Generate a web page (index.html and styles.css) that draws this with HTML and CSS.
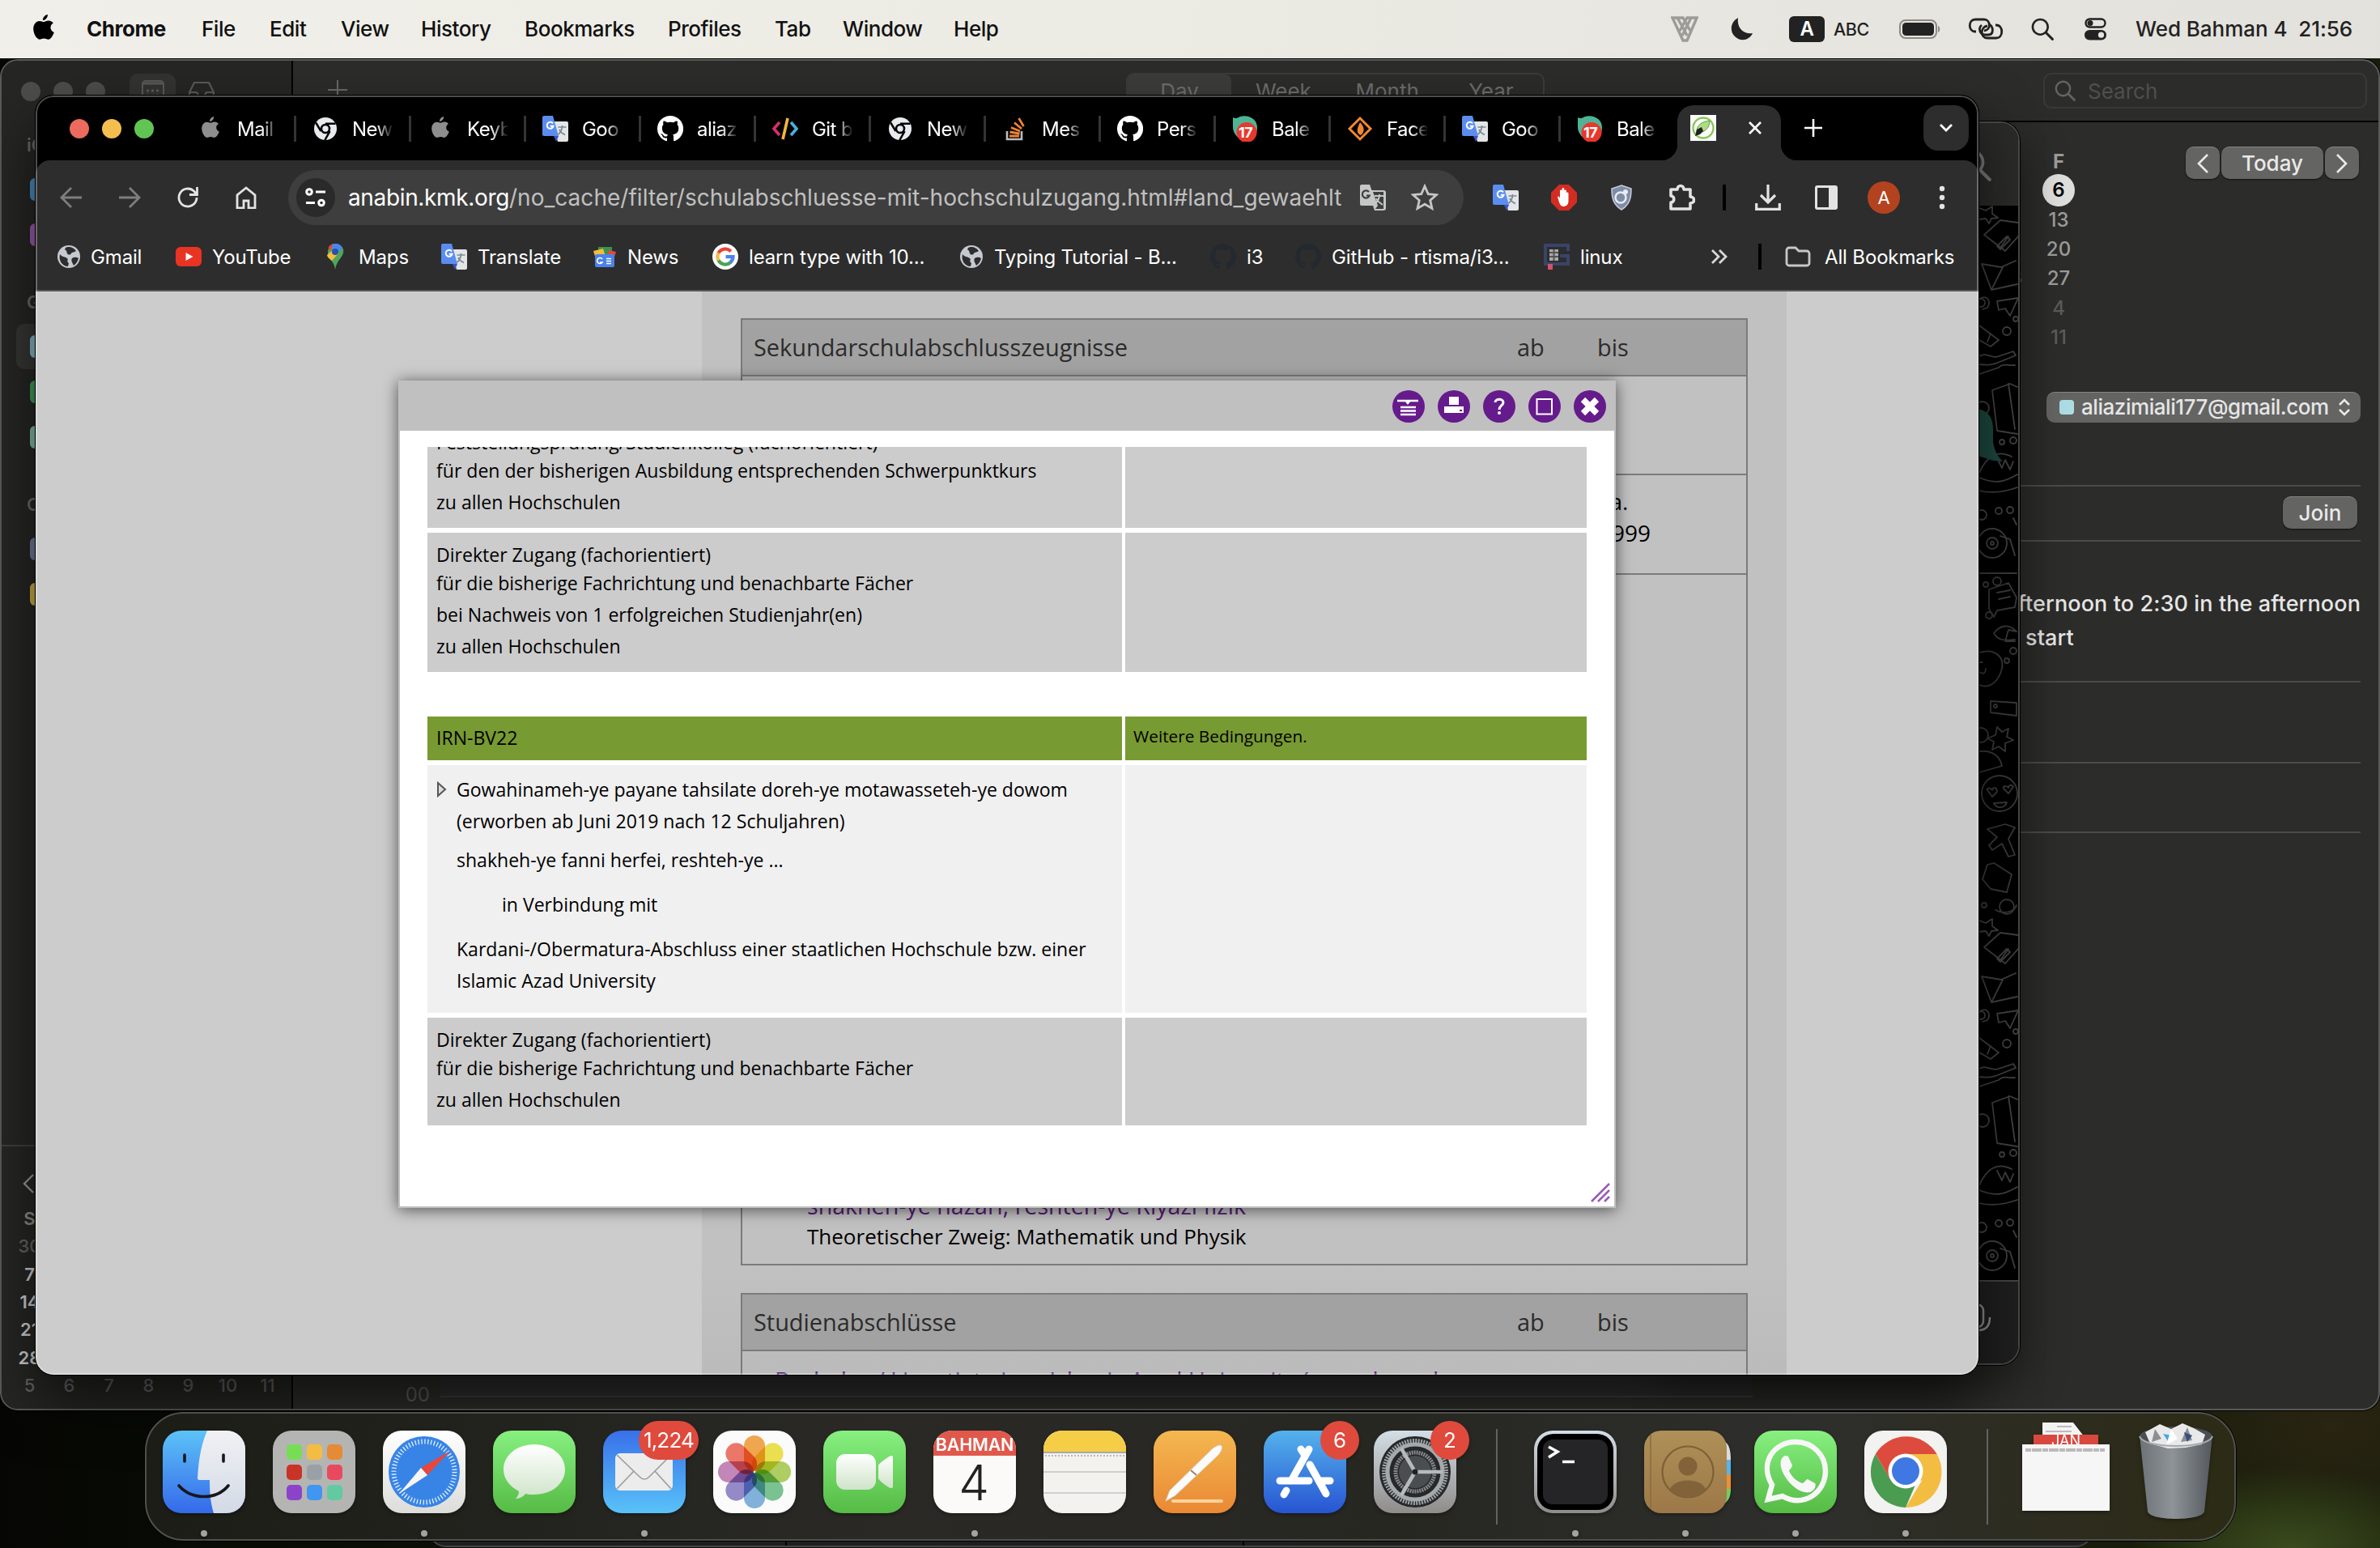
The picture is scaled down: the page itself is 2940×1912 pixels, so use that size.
FILE: index.html
```
<!DOCTYPE html>
<html lang="en">
<head>
<meta charset="utf-8">
<title>Desktop</title>
<link rel="stylesheet" href="styles.css">
</head>
<body>
<svg class="defs" width="0" height="0" aria-hidden="true">
  <defs>
    <linearGradient id="gGreen" x2="0" y2="1"><stop offset="0" stop-color="#87f080"/><stop offset="1" stop-color="#55bb45"/></linearGradient>
    <linearGradient id="gWhite" x2="0" y2="1"><stop offset="0" stop-color="#ffffff"/><stop offset="1" stop-color="#cfe3c9"/></linearGradient>
    <linearGradient id="gBlue" x2="0" y2="1"><stop offset="0" stop-color="#3870ea"/><stop offset="1" stop-color="#59c2f8"/></linearGradient>
    <linearGradient id="gFinder" x2="0" y2="1"><stop offset="0" stop-color="#5cc3f8"/><stop offset="1" stop-color="#3569ea"/></linearGradient>
    <linearGradient id="gFace" x2="0" y2="1"><stop offset="0" stop-color="#f1f1f4"/><stop offset="1" stop-color="#d2dae6"/></linearGradient>
    <linearGradient id="gStore" x2="0" y2="1"><stop offset="0" stop-color="#54b2ec"/><stop offset="1" stop-color="#2754d2"/></linearGradient>
    <linearGradient id="gPages" x2="0" y2="1"><stop offset="0" stop-color="#f4b850"/><stop offset="1" stop-color="#ea8834"/></linearGradient>
    <linearGradient id="gSilver" x2="0" y2="1"><stop offset="0" stop-color="#d3dee6"/><stop offset="1" stop-color="#8f8c89"/></linearGradient>
    <linearGradient id="gPaper" x2="0" y2="1"><stop offset="0" stop-color="#ffffff"/><stop offset="1" stop-color="#dcdcda"/></linearGradient>
    <linearGradient id="gTan" x2="0" y2="1"><stop offset="0" stop-color="#af9057"/><stop offset="1" stop-color="#9c7848"/></linearGradient>
    <linearGradient id="gBin"><stop offset="0" stop-color="#6d7277"/><stop offset=".45" stop-color="#8e9398"/><stop offset="1" stop-color="#54585d"/></linearGradient>
    <clipPath id="squircle"><rect width="102" height="102" rx="23"/></clipPath>

    <symbol id="apple" viewBox="0 0 26 30"><path d="M17.6 0c.3 3.300-2.600 6.700-5.600 6.600C11.600 3.600 14.500.4 17.600 0zM13.200 8.500c1.300 0 2.900-1.500 5.600-1.400 2.300.1 4.200 1.200 5.200 2.800-4.600 2.900-3.700 8.900 1 10.700-1 2.800-3.500 8-6.600 8.200-1.900.1-2.700-1.100-5.100-1.100-2.300 0-3.300 1.100-5.100 1.100C4.600 28.700 1 21.900 1 16.500 1 11 4.400 7.500 8 7.400c2.300 0 3.900 1.100 5.200 1.100z"/></symbol>
    <symbol id="chromeMono" viewBox="0 0 28 28"><path fill="#e8eaed" fill-rule="evenodd" d="M14 0a14 14 0 1 0 0 28 14 14 0 0 0 0-28z"/><circle cx="14" cy="14" r="5" fill="none" stroke="#000" stroke-width="2.600"/><path stroke="#000" stroke-width="2.500" fill="none" d="M14 7.700h12.500M8.500 17.200 2.200 6.500M19.500 17.200 13.300 28"/></symbol>
    <symbol id="translate" viewBox="0 0 32 32"><path fill="#e3e5e6" d="M12 7h18a2 2 0 0 1 2 2v21a2 2 0 0 1-2 2H19z"/><path fill="#5b8df0" d="M2 0h11l7 25H2a2 2 0 0 1-2-2V2a2 2 0 0 1 2-2z"/><path fill="#3a53c4" d="m14 25h6l-3 7z"/><path d="M13 9.500a4 4 0 1 0 .6 3.300H9.800" fill="none" stroke="#fff" stroke-width="2"/><path d="M19.500 14h10M24.500 12v2c0 0-1 6-5 9M21 17c1 3 4 5 7 6.500" fill="none" stroke="#7a8b94" stroke-width="1.700"/></symbol>
    <symbol id="github" viewBox="0 0 16 16"><path d="M8 0a8 8 0 0 0-2.530 15.590c.4.070.55-.17.55-.38v-1.490c-2.010.37-2.530-.49-2.690-.940-.09-.23-.48-.940-.820-1.130-.28-.15-.68-.52-.01-.53.630-.01 1.080.58 1.230.820.720 1.210 1.870.870 2.330.660.070-.52.280-.870.510-1.070-1.780-.2-3.640-.89-3.640-3.950 0-.870.31-1.590.82-2.150-.080-.2-.36-1.020.080-2.120 0 0 .67-.21 2.200.82a7.500 7.500 0 0 1 4 0c1.530-1.040 2.200-.82 2.200-.82.44 1.100.16 1.920.08 2.120.51.56.82 1.270.82 2.150 0 3.070-1.870 3.750-3.650 3.950.29.25.54.730.54 1.480v2.200c0 .21.150.46.550.38A8 8 0 0 0 8 0z"/></symbol>
    <symbol id="bale" viewBox="0 0 32 32"><path fill="#4fb496" d="M1 2c4 2 5 1 9-1 10-3 22 3 21 15S20 31 14 30 1 22 1 14z"/><circle cx="18" cy="20.500" r="12.500" fill="#e8372c"/></symbol>
    <symbol id="globe" viewBox="0 0 30 30"><circle cx="15" cy="15" r="14" fill="#c6cad0"/><path fill="#2d2d2d" d="M4 12c3 4 7 3 9 5s-1 3 1 5 0 3 0 5C7 27 2 20 4 12zM14 3c5 0 8 2 10 5-2 2-5 1-6 3s-4 2-5 0 0-3-2-4 0-4 3-4zM19 17c3-2 6-1 8 0-1 4-3 7-6 9-1-3-4-6-2-9z"/></symbol>
    <symbol id="search" viewBox="0 0 26 26"><circle cx="10.500" cy="10.500" r="8.700" fill="none" stroke="currentColor" stroke-width="2.400"/><path d="m17 17 7.500 7.500" stroke="currentColor" stroke-width="2.800" stroke-linecap="round"/></symbol>
    <symbol id="doodle" viewBox="0 0 50 440">
      <g fill="none" stroke="#424242" stroke-width="1.800" stroke-linejoin="round" stroke-linecap="round">
        <path d="M2 3l8 3 8-5 0 9 7 5-8 1-3 6-4-6-9 1M8 36 28 18l22 3M8 36l26 20 16-18M28 52 38 38M24 50l12-12 4 4-12 12zM5 72l24 4 18-8M5 72l12 32 14-28M17 104l32-7"/>
        <circle cx="4" cy="120" r="5"/><path d="M2 116c8-8 16 2 10 10l-6 2M24 118l26-4-10 22-6-9-8 2zM2 148l24 18-10 8-14-8M16 158l-4 10"/><circle cx="36" cy="155" r="5"/><circle cx="47" cy="140" r="3"/>
        <path d="M2 186c10-6 14 4 24 0l18-6 3 5-20 8c-8 4-14 4-25 3M2 208l24-8c4-6 12-2 20-3M18 228l22-8 9 4M18 228l6 50 25 4M38 220l8 56"/><circle cx="6" cy="250" r="8"/><circle cx="30" cy="292" r="3"/><circle cx="44" cy="290" r="4"/>
        <path d="M2 330c8-18 20-30 40-20M2 336c20 8 30 6 47-4M24 312l6 12 4-10 6 12 4-10M2 352c16 4 30 2 47-4"/><circle cx="26" cy="377" r="4"/><circle cx="40" cy="376" r="4"/><circle cx="5" cy="382" r="6"/>
        <circle cx="18" cy="417" r="18"/><circle cx="18" cy="417" r="7"/><circle cx="18" cy="417" r="2"/><path d="M28 408l12 4 6 20M44 386l4 8"/>
      </g>
    </symbol>
    <symbol id="doodle2" viewBox="0 0 50 440">
      <g fill="none" stroke="#3a3a3a" stroke-width="1.800" stroke-linejoin="round" stroke-linecap="round">
        <path d="M2 14h46M14 34l24-8 10 18-2 12-22 4-4 8-6-10zM24 38l16-3M26 46l14-3M20 88c8-10 18-12 28-2l-10-2-4 14h12M20 88c4 8 12 10 26 8"/><circle cx="24" cy="24" r="5"/><circle cx="10" cy="28" r="3"/><circle cx="14" cy="66" r="4"/>
        <path d="M2 112c20-6 34 6 26 26-6 14-16 18-26 14M2 124h4M2 136c6 4 8 0 8-4"/><circle cx="36" cy="122" r="3"/><circle cx="44" cy="110" r="4"/><path d="M16 172l32 2v16l-32-4zM24 204l6 6 8-4-2 10 8 4-10 4 0 10-8-6-8 4 2-10-8-4 10-4zM2 234c18-2 26 8 28 18l-28 8"/><circle cx="22" cy="178" r="2"/><circle cx="4" cy="214" r="9"/>
        <circle cx="27" cy="286" r="22"/><path d="M12 282l6 8 6-6c0-6-6-6-6-2-2-4-8-2-6 0zM32 280l6 6 6-8c-2-4-6-2-6 1-2-3-8-2-6 1zM20 298c4 8 14 6 16-1z"/><path d="M12 330l22-6 12 4-8 14 8 20-8 2-8-16-12 8-4-6 10-10z"/>
        <path d="M6 392l6-18 8-2 22 14-6 22-20-4z"/><circle cx="36" cy="426" r="9"/><path d="M22 430c10 6 24 2 26-6"/><circle cx="8" cy="424" r="3"/>
      </g>
    </symbol>
  </defs>
</svg>

<header class="menubar">
  <nav class="menus">
    <svg class="menu-apple" viewBox="0 0 26 30"><use href="#apple"/></svg>
    <b>Chrome</b><span>File</span><span>Edit</span><span>View</span><span>History</span><span>Bookmarks</span><span>Profiles</span><span>Tab</span><span>Window</span><span>Help</span>
  </nav>
  <div class="status">
    <svg width="34" height="34" viewBox="0 0 34 34" fill="none" stroke="#9d9c98" stroke-width="3.400"><path d="M2 3h6l9 16 8-16h7L20 31h-5L2 3zM8 3h7l9 16M26 3h-6l-9 16M14 25l3-6 3 6"/></svg>
    <svg width="30" height="30" viewBox="0 0 30 30"><path fill="#222" d="M10 1C1 6-1 17 6 24s18 5 22-4C19 22 8 15 10 1z"/></svg>
    <i class="key">A</i><small>ABC</small>
    <svg width="52" height="24" viewBox="0 0 52 24"><rect x="1" y="1" width="45" height="22" rx="7" fill="none" stroke="#8b8a86" stroke-width="2"/><rect x="4" y="4" width="39" height="16" rx="4.500" fill="#222"/><path d="M48 8c3 1 3 7 0 8z" fill="#8b8a86"/></svg>
    <svg width="44" height="28" viewBox="0 0 44 28" fill="none" stroke="#222" stroke-width="2.800"><path d="M10 17H9C0 17 0 2 9 2h11c8 0 9 13 0 14M34 9h1c9 0 9 16 0 16H24c-9 0-9-14 0-15"/><path d="M17 9c-5 4-2 12 4 12h4c7 0 7-10 1-13"/></svg>
    <svg width="28" height="28" viewBox="0 0 26 26" class="ink"><use href="#search"/></svg>
    <svg width="27" height="28" viewBox="0 0 27 28"><rect x="1.500" y="1.500" width="24" height="10" rx="5" fill="none" stroke="#222" stroke-width="2.400"/><circle cx="7" cy="6.500" r="3.500" fill="#222"/><rect y="15" width="27" height="12.500" rx="6.200" fill="#222"/><circle cx="20.500" cy="21.200" r="3.600" fill="#e6e4de"/></svg>
    <time>Wed Bahman 4&nbsp; 21:56</time>
  </div>
</header>

<section class="window calendar">
  <aside class="cal-side">
    <div class="cal-side-top"><i class="dim-light"></i><i class="dim-light"></i><i class="dim-light"></i>
      <span class="cal-toggle"><svg width="28" height="28" viewBox="0 0 28 28"><rect x="1" y="1" width="26" height="26" rx="4" fill="none" stroke="#5a5a59" stroke-width="2"/><path stroke="#5a5a59" stroke-width="3" d="M2 4h24"/><path stroke="#5a5a59" stroke-width="3" stroke-dasharray="3 3" d="M6 13h17M6 19h17"/></svg></span>
      <svg width="32" height="26" viewBox="0 0 32 26" fill="none" stroke="#5a5a59" stroke-width="2.200"><path d="M1 14 7 2h18l6 12v10H1zM1 14h9l3 5h6l3-5h9"/></svg>
    </div>
    <div class="cal-list">
      <h4>iCloud</h4><p class="c-blue"></p><p class="c-purple"></p>
      <h4>Google</h4><p class="c-sky on"></p><p class="c-green"></p><p class="c-mint"></p>
      <h4>Other</h4><p class="c-slate"></p><p class="c-gold"></p>
    </div>
    <div class="mini">
      <div class="mini-nav"><svg width="14" height="24" viewBox="0 0 14 24" fill="none" stroke="#9a9a99" stroke-width="2.400"><path d="M13 1 2 12l11 11"/></svg></div>
      <div class="mini-grid"><b>S</b><b>M</b><b>T</b><b>W</b><b>T</b><b>F</b><b>S</b>
        <i>30</i><i>31</i><span>1</span><span>2</span><span>3</span><span>4</span><span>5</span>
        <span>7</span><span>8</span><span>9</span><span>10</span><span>11</span><span>12</span><span>13</span>
        <span>14</span><span>15</span><span>16</span><span>17</span><span>18</span><span>19</span><span>20</span>
        <span>21</span><span>22</span><span>23</span><span>24</span><span>25</span><span>26</span><span>27</span>
        <span>28</span><span>29</span><span>30</span><span>31</span><i>1</i><i>2</i><i>3</i>
        <i>5</i><i>6</i><i>7</i><i>8</i><i>9</i><i>10</i><i>11</i></div>
    </div>
  </aside>
  <div class="cal-main">
    <div class="cal-bar">
      <svg width="24" height="24" viewBox="0 0 24 24" stroke="#6a6a69" stroke-width="2"><path d="M12 0v24M0 12h24"/></svg>
      <div class="segments"><span class="on">Day</span><span>Week</span><span>Month</span><span>Year</span></div>
      <div class="cal-search"><svg width="26" height="26" viewBox="0 0 26 26"><use href="#search"/></svg>Search</div>
    </div>
    <div class="cal-body">
      <div class="timeline"><span>00</span><div class="slots"></div></div>
      <div class="inspector">
        <div class="month">
          <div class="month-col left"><b>&nbsp;</b><span>&nbsp;</span><span>12</span><span>19</span><span>26</span><i>3</i><i>10</i></div>
          <div class="month-col"><b>F</b><span class="today">6</span><span>13</span><span>20</span><span>27</span><i>4</i><i>11</i></div>
          <div class="pager"><button><svg width="14" height="24" viewBox="0 0 14 24"><path d="M13 1 2 12l11 11"/></svg></button><button class="wide">Today</button><button><svg width="14" height="24" viewBox="0 0 14 24"><path d="m1 1 11 11L1 23"/></svg></button></div>
        </div>
        <div class="account"><i></i>aliazimiali177@gmail.com<svg width="16" height="24" viewBox="0 0 16 24"><path d="m2 9 6-6 6 6M2 15l6 6 6-6"/></svg></div>
        <div class="join"><button>Join</button></div>
        <div class="note"><p class="clip">afternoon to 2:30 in the afternoon</p><p class="second">start</p></div>
        <div class="line-a"></div><div class="line-b"></div>
      </div>
    </div>
  </div>
</section>

<section class="window chat">
  <div class="chat-head"><svg width="40" height="40" viewBox="0 0 26 26"><use href="#search"/></svg></div>
  <div class="chat-body">
    <svg width="50" height="440"><use href="#doodle"/></svg><svg width="50" height="440"><use href="#doodle2"/></svg><svg width="50" height="440"><use href="#doodle"/></svg>
    <svg class="bubble" width="40" height="66" viewBox="0 0 40 66"><path fill="#1c4a40" d="M0 0c20 0 28 10 28 26v16c2 12 6 18 12 24-12 0-20-4-28-6H0z"/></svg>
  </div>
  <div class="chat-foot"><svg width="26" height="44" viewBox="0 0 26 44" fill="none" stroke="#8d8d8c" stroke-width="2.500"><path d="M2 4c6-4 12 0 12 6v12c0 8-8 10-12 6M22 18c0 12-6 16-14 16M8 34v8"/></svg></div>
</section>

<section class="window chrome">
  <div class="tabstrip">
    <div class="lights"><i></i><i></i><i></i></div>
    <div class="tabs">
      <div class="tab"><svg class="fav grey" viewBox="0 0 26 30"><use href="#apple"/></svg><span>Mail</span></div>
      <div class="tab"><svg class="fav f28" viewBox="0 0 28 28"><use href="#chromeMono"/></svg><span>New</span></div>
      <div class="tab"><svg class="fav grey" viewBox="0 0 26 30"><use href="#apple"/></svg><span>Keyb</span></div>
      <div class="tab"><svg class="fav" viewBox="0 0 32 32"><use href="#translate"/></svg><span>Goo</span></div>
      <div class="tab"><svg class="fav white" viewBox="0 0 16 16"><use href="#github"/></svg><span>aliaz</span></div>
      <div class="tab"><svg class="fav" viewBox="0 0 32 32" fill="none" stroke-width="3.600"><path stroke="#d62e6c" d="M9 8 2 16l7 8"/><path stroke="#f5b63c" d="M19 3 13 29"/><path stroke="#4ab0e0" d="m23 8 7 8-7 8"/></svg><span>Git b</span></div>
      <div class="tab"><svg class="fav f28" viewBox="0 0 28 28"><use href="#chromeMono"/></svg><span>New</span></div>
      <div class="tab"><svg class="fav" viewBox="0 0 32 32" fill="none"><path stroke="#b9bbbd" stroke-width="2.600" d="M6 19v10h18V19"/><path stroke="#ef8236" stroke-width="2.800" d="M9 25h12M9.500 20l12 2M11 14.500l11 4.500M15 8.500l9 7.500M20.500 3l6 10"/></svg><span>Mes</span></div>
      <div class="tab"><svg class="fav white" viewBox="0 0 16 16"><use href="#github"/></svg><span>Pers</span></div>
      <div class="tab"><span class="favbox"><svg class="fav" viewBox="0 0 32 32"><use href="#bale"/></svg><em>17</em></span><span>Bale</span></div>
      <div class="tab"><svg class="fav" viewBox="0 0 32 32" fill="none"><path stroke="#ef8733" stroke-width="3" d="m16 3 13 13-13 13L3 16z"/><path fill="#ef8733" d="M16 8c6 6 6 12 1 16-5-2-6-6-1-16z"/></svg><span>Face</span></div>
      <div class="tab"><svg class="fav" viewBox="0 0 32 32"><use href="#translate"/></svg><span>Goo</span></div>
      <div class="tab last"><span class="favbox"><svg class="fav" viewBox="0 0 32 32"><use href="#bale"/></svg><em>17</em></span><span>Bale</span></div>
    </div>
    <div class="tab-active">
      <svg class="fav" viewBox="0 0 32 32"><path fill="#fff" d="M0 0h32v32H0z"/><circle cx="16" cy="16" r="12.500" fill="none" stroke="#8ac75a" stroke-width="2.400"/><path fill="#aedb86" stroke="#5ea536" d="M8 22C7 13 14 8 24 7c0 8-5 15-14 14z"/><path fill="#222" d="m6 26 2-8 6-3 2 5-4 4z"/></svg>
      <svg width="18" height="18" viewBox="0 0 18 18" stroke="#fff" stroke-width="2.600"><path d="m2 2 14 14M16 2 2 16"/></svg>
    </div>
    <svg class="plus" width="22" height="22" viewBox="0 0 22 22" stroke="#fff" stroke-width="2.600"><path d="M11 0v22M0 11h22"/></svg>
    <div class="tab-list"><svg width="18" height="12" viewBox="0 0 18 12" fill="none" stroke="#fff" stroke-width="2.800"><path d="m2 2 7 7 7-7"/></svg></div>
  </div>
  <div class="toolbar">
    <div class="nav">
      <svg width="28" height="28" viewBox="0 0 28 28" stroke="#7e7e7e"><path d="M27 14H3M14 2 2 14l12 12"/></svg>
      <svg width="28" height="28" viewBox="0 0 28 28" stroke="#7e7e7e"><path d="M1 14h24M14 2l12 12-12 12"/></svg>
      <svg width="28" height="28" viewBox="0 0 28 28" stroke="#e3e3e3"><path d="M25 14a11 11 0 1 1-3.500-8l3.500 4M25.500 1v9.500H16"/></svg>
      <svg width="28" height="28" viewBox="0 0 28 28" stroke="#e3e3e3"><path d="M3 27V11L14 2l11 9v16h-8v-9h-6v9z"/></svg>
    </div>
    <div class="omnibox">
      <span class="site"><svg width="26" height="24" viewBox="0 0 26 24" fill="none" stroke="#fff" stroke-width="3"><circle cx="5" cy="5" r="3.300"/><path d="M13 5h12M1 18.500h11"/><circle cx="20" cy="18.500" r="3.300"/></svg></span>
      <span class="url"><b>anabin.kmk.org</b>/no_cache/filter/schulabschluesse-mit-hochschulzugang.html#land_gewaehlt</span>
      <svg width="34" height="34" viewBox="0 0 34 34"><path fill="#c4c7c5" d="M3 1h10l2.500 7H30a3 3 0 0 1 3 3v19a3 3 0 0 1-3 3H19l-2-6H3a2 2 0 0 1-2-2V3a2 2 0 0 1 2-2z"/><path fill="#3e3e3e" d="M17 10h13v21H20l3-4z"/><path d="M12 10a4.600 4.600 0 1 0 .8 4.500H9" fill="none" stroke="#3e3e3e" stroke-width="2.200"/><path d="M19 15h11M25 13v2c-1 5-3 8-6 10M21 18c1 3 5 6 8 8" fill="none" stroke="#c4c7c5" stroke-width="2"/></svg>
      <svg width="34" height="34" viewBox="0 0 34 34" fill="none" stroke="#c4c7c5" stroke-width="2.800"><path d="m17 3 4.200 9.600 10.300 1-7.800 6.800 2.300 10.100-9-5.300-9 5.300 2.300-10.100-7.800-6.800 10.300-1z"/></svg>
    </div>
    <div class="ext">
      <svg width="32" height="32" viewBox="0 0 32 32"><use href="#translate"/></svg>
      <svg width="32" height="32" viewBox="0 0 32 32"><path fill="#d32d22" d="M10 0h12l10 10v12L22 32H10L0 22V10z"/><path fill="#fff" d="M8 15c1-1 2-1 3 2V8c0-2 2.600-2 2.600 0V5.500c0-2 2.700-2 2.700 0V8c0-2 2.700-2 2.700 0v3c0-2 2.500-2 2.500 0v9c0 5-3 7-6 7-4 0-5-3-7.500-12z"/></svg>
      <svg width="26" height="32" viewBox="0 0 26 32"><path fill="#7f8ca5" stroke="#c7cfdd" stroke-width="1.500" d="m13 1 12 4c0 12-2 20-12 26C3 25 1 17 1 5z"/><circle cx="12" cy="16" r="6.500" fill="none" stroke="#e8ecf4" stroke-width="2.500"/><circle cx="18" cy="9" r="3" fill="#e8ecf4"/></svg>
      <svg width="34" height="34" viewBox="0 0 34 34" fill="none" stroke="#e3e3e3" stroke-width="3.600"><path d="M4 7h8c0-6 8-6 8 0h8v9c6 0 6 8 0 8v7H4v-8c5 0 5-8 0-8z" stroke-linejoin="round"/></svg>
      <i class="bar"></i>
      <svg width="32" height="32" viewBox="0 0 32 32" fill="none" stroke="#e3e3e3" stroke-width="3.200"><path d="M16 0v21M7 13l9 9 9-9M1.700 23v7.300h28.600V23"/></svg>
      <svg width="28" height="30" viewBox="0 0 28 30"><path fill="#e3e3e3" fill-rule="evenodd" d="M3 0h22a3 3 0 0 1 3 3v24a3 3 0 0 1-3 3H3a3 3 0 0 1-3-3V3a3 3 0 0 1 3-3zm0 3v24h14V3z"/></svg>
      <span class="avatar">A</span>
      <svg width="8" height="30" viewBox="0 0 8 30" fill="#e3e3e3"><circle cx="4" cy="4" r="3.200"/><circle cx="4" cy="15" r="3.200"/><circle cx="4" cy="26" r="3.200"/></svg>
    </div>
  </div>
  <div class="bookmarks">
    <a><svg viewBox="0 0 30 30"><use href="#globe"/></svg>Gmail</a>
    <a><svg viewBox="0 0 32 24"><rect width="32" height="24" rx="6" fill="#e93323"/><path fill="#fff" d="m12.500 7 9 5-9 5z"/></svg>YouTube</a>
    <a><svg viewBox="0 0 30 32"><path fill="#4fa65a" d="M15 32c-1-7-3-9-7-14C5 13 5 6 10 2s13-1 15 5c2 9-8 12-10 25z"/><path fill="#e94335" d="M6.500 5C8 2 10 1 13 0l-4 9z"/><path fill="#4b86ee" d="M12 0c6-1 10 1 12 5l-7 7-6-5z"/><path fill="#f5bd41" d="m5 14 7-6 7 4-8 9c-4-3-6-5-6-7z"/><circle cx="15" cy="10" r="4" fill="#2b4fae"/></svg>Maps</a>
    <a><svg viewBox="0 0 32 32"><use href="#translate"/></svg>Translate</a>
    <a><svg viewBox="0 0 30 30"><path fill="#3c9150" d="M7 3h17v10H7z"/><path fill="#f3bb3b" d="m1 8 12-3 5 16-12 3z"/><path fill="#df4a3b" d="m20 7 9 2-4 13-8-2z"/><rect x="3" y="12" width="24" height="16" rx="2" fill="#4b82ea"/><path d="M12 18a3.500 3.500 0 1 0 0 4h-3M17 17.500h6M17 20.500h6M17 23.500h6" stroke="#fff" stroke-width="1.600" fill="none"/></svg>News</a>
    <a><svg viewBox="0 0 32 32"><circle cx="16" cy="16" r="16" fill="#fff"/><g fill="none" stroke-width="4.200"><path stroke="#e94335" d="M7.500 11.500A9.500 9.500 0 0 1 22.800 9.500"/><path stroke="#f5bb40" d="M7.500 20.500a9.500 9.500 0 0 1 0-9"/><path stroke="#4ca356" d="M22.500 23a9.500 9.500 0 0 1-15-2.500"/><path stroke="#4a84ee" d="M16.500 16.200h9A9.500 9.500 0 0 1 22 23.300"/></g></svg>learn type with 10...</a>
    <a><svg viewBox="0 0 30 30"><use href="#globe"/></svg>Typing Tutorial - B...</a>
    <a><svg class="ghost" viewBox="0 0 16 16"><use href="#github"/></svg>i3</a>
    <a><svg class="ghost" viewBox="0 0 16 16"><use href="#github"/></svg>GitHub - rtisma/i3...</a>
    <a><svg viewBox="0 0 32 32"><path fill="none" stroke="#3a4468" stroke-width="4" d="M30 9V2H2v23h28V15H20"/><path fill="#a9a9a9" d="M7 7h11v14H7z"/><path stroke="#555" stroke-width="2" d="M7 11h11M7 16h11M12.500 7v14"/><path fill="#d4506c" d="M5 25h6v7H5z"/></svg>linux</a>
    <svg class="more" viewBox="0 0 22 18" fill="none" stroke="#d8d8d8" stroke-width="2.800"><path d="m2 1 8 8-8 8M11 1l8 8-8 8"/></svg>
    <i class="bar"></i>
    <a class="all"><svg viewBox="0 0 32 26" fill="none" stroke="#c7c7c7" stroke-width="2.800"><path d="M2 5a3 3 0 0 1 3-3h8l4 4h10a3 3 0 0 1 3 3v12a3 3 0 0 1-3 3H5a3 3 0 0 1-3-3z"/></svg>All Bookmarks</a>
  </div>
  <div class="page">
    <div class="sheet">
      <div class="table t1">
        <div class="thead"><span>Sekundarschulabschlusszeugnisse</span><span>ab</span><span>bis</span></div>
        <div class="r1"></div>
        <div class="r2"><p>ca.<br>1999</p></div>
        <div class="r3"><p class="link">shakheh-ye nazari, reshteh-ye Riyazi fizik</p><p>Theoretischer Zweig: Mathematik und Physik</p></div>
      </div>
      <div class="table t2">
        <div class="thead"><span>Studienabschlüsse</span><span>ab</span><span>bis</span></div>
        <div class="r4"><p class="link">Bachelor / Lizentiat einer Islamic Azad University (erworben ab</p></div>
      </div>
    </div>
    <div class="modal">
      <div class="modal-head">
        <svg viewBox="0 0 40 40"><circle cx="20" cy="20" r="20"/><path stroke="#fff" stroke-width="2.600" d="M6 13h26M10 21h19M10 25.500h19M10 30h19"/><path fill="#fff" d="m15 13 4 5 4-5z"/></svg>
        <svg viewBox="0 0 40 40"><circle cx="20" cy="20" r="20"/><path fill="#fff" d="M14 8h12v10H14zM8 20h24v8H8z"/><path fill="#651b8b" d="M27 24h3v2h-3z"/></svg>
        <svg viewBox="0 0 40 40"><circle cx="20" cy="20" r="20"/><path fill="none" stroke="#fff" stroke-width="3" d="M15 15c0-5 10-5 10 0 0 4-5 4-5 9"/><circle cx="20" cy="28" r="2" fill="#fff"/></svg>
        <svg viewBox="0 0 40 40"><circle cx="20" cy="20" r="20"/><rect x="10.500" y="11" width="18.500" height="18.500" fill="none" stroke="#fff" stroke-width="2"/></svg>
        <svg viewBox="0 0 40 40"><circle cx="20" cy="20" r="20"/><path stroke="#fff" stroke-width="7.500" d="m11.500 11.500 17 17M28.500 11.500l-17 17"/></svg>
      </div>
      <div class="scroller">
        <div class="grid">
          <div class="cell grey"><p>Feststellungsprüfung/Studienkolleg (fachorientiert)</p><p>für den der bisherigen Ausbildung entsprechenden Schwerpunktkurs</p><p>zu allen Hochschulen</p></div><div class="cell grey"></div>
          <div class="cell grey"><p>Direkter Zugang (fachorientiert)</p><p>für die bisherige Fachrichtung und benachbarte Fächer</p><p>bei Nachweis von 1 erfolgreichen Studienjahr(en)</p><p>zu allen Hochschulen</p></div><div class="cell grey"></div>
        </div>
        <div class="grid second">
          <div class="cell green">IRN-BV22</div><div class="cell green small">Weitere Bedingungen.</div>
          <div class="cell light"><svg width="12" height="20" viewBox="0 0 12 20" fill="#ddd" stroke="#555" stroke-width="2"><path d="M1 2v16l9-8z"/></svg><div><p>Gowahinameh-ye payane tahsilate doreh-ye motawasseteh-ye dowom<br>(erworben ab Juni 2019 nach 12 Schuljahren)</p><p class="g1">shakheh-ye fanni herfei, reshteh-ye ...</p><p class="g2 in">in Verbindung mit</p><p class="g2">Kardani-/Obermatura-Abschluss einer staatlichen Hochschule bzw. einer<br>Islamic Azad University</p></div></div><div class="cell light"></div>
          <div class="cell grey"><p>Direkter Zugang (fachorientiert)</p><p>für die bisherige Fachrichtung und benachbarte Fächer</p><p>zu allen Hochschulen</p></div><div class="cell grey"></div>
        </div>
      </div>
      <svg class="grip" width="24" height="24" viewBox="0 0 24 24" stroke="#9a5cb4" stroke-width="2.600"><path d="M1 23 23 1M9 23 23 9M17 23l6-6"/></svg>
    </div>
  </div>
</section>

<div class="window lower"><i></i><i></i></div>

<footer class="dock">
  <div class="app run"><svg viewBox="0 0 102 102"><g clip-path="url(#squircle)"><path fill="url(#gFinder)" d="M0 0h102v102H0z"/><path fill="url(#gFace)" d="M55 0C46 20 44 42 43 59c0 1 1 2 2 2h13c0 16 1 28 5 41h39V0z"/></g><path fill="none" stroke="#16181c" stroke-width="3.600" stroke-linecap="round" d="M27 30v8M75 30v8M20 68c16 18 46 18 61 0"/></svg></div>
  <div class="app"><svg viewBox="0 0 102 102"><rect width="102" height="102" rx="23" fill="#b4b5b3"/><g><rect x="17" y="17" width="19" height="19" rx="5" fill="#77dd55"/><rect x="42" y="17" width="19" height="19" rx="5" fill="#f3bd44"/><rect x="67" y="17" width="19" height="19" rx="5" fill="#e58a37"/><rect x="17" y="42" width="19" height="19" rx="5" fill="#c93427"/><rect x="42" y="42" width="19" height="19" rx="5" fill="#9aa1a6"/><rect x="67" y="42" width="19" height="19" rx="5" fill="#e9495e"/><rect x="17" y="67" width="19" height="19" rx="5" fill="#8d43c9"/><rect x="42" y="67" width="19" height="19" rx="5" fill="#4096f0"/><rect x="67" y="67" width="19" height="19" rx="5" fill="#62c9a0"/></g></svg></div>
  <div class="app run"><svg viewBox="0 0 102 102"><rect width="102" height="102" rx="23" fill="url(#gPaper)"/><circle cx="51" cy="51" r="44" fill="#3884e6"/><circle cx="51" cy="51" r="37.500" fill="none" stroke="#e6f1fd" stroke-width="6" stroke-dasharray="1.300 2.627"/><path fill="#e9463c" d="M83 25 47 46l8 9z"/><path fill="#f6f6f6" d="M20 78 47 46l8 9z"/></svg></div>
  <div class="app"><svg viewBox="0 0 102 102"><rect width="102" height="102" rx="23" fill="url(#gGreen)"/><path fill="url(#gWhite)" d="M51 17c22 0 38 14 38 31S73 79 51 79c-4 0-8 0-11-1-3 4-8 6-12 6 3-3 4-6 4-9-11-6-19-15-19-27 0-17 16-31 38-31z"/></svg></div>
  <div class="app run"><svg viewBox="0 0 102 102"><rect width="102" height="102" rx="23" fill="url(#gBlue)"/><rect x="15" y="28" width="71" height="46" rx="6" fill="#ececec"/><path fill="none" stroke="#9b9b9b" stroke-width="1.600" d="M17 72 38 50M84 72 64 50M17 30l28 27c4 4 8 4 12 0l27-27"/></svg><em class="badge wide">1,224</em></div>
  <div class="app"><svg viewBox="0 0 102 102"><rect width="102" height="102" rx="23" fill="#fbfbfb"/><g class="petals"><rect x="38" y="6" width="26" height="44" rx="13" fill="#f3a03c"/><rect x="38" y="6" width="26" height="44" rx="13" fill="#ecdf3f" transform="rotate(45 51 51)"/><rect x="38" y="6" width="26" height="44" rx="13" fill="#a9cc52" transform="rotate(90 51 51)"/><rect x="38" y="6" width="26" height="44" rx="13" fill="#6fbf88" transform="rotate(135 51 51)"/><rect x="38" y="6" width="26" height="44" rx="13" fill="#75abdc" transform="rotate(180 51 51)"/><rect x="38" y="6" width="26" height="44" rx="13" fill="#8a80c4" transform="rotate(225 51 51)"/><rect x="38" y="6" width="26" height="44" rx="13" fill="#c07bb4" transform="rotate(270 51 51)"/><rect x="38" y="6" width="26" height="44" rx="13" fill="#ee6a5a" transform="rotate(315 51 51)"/></g></svg></div>
  <div class="app"><svg viewBox="0 0 102 102"><rect width="102" height="102" rx="23" fill="url(#gGreen)"/><rect x="16" y="29" width="49" height="44" rx="11" fill="url(#gWhite)"/><path fill="url(#gWhite)" d="M68 43c0-2 14-12 16-12s2 1 2 2v36c0 2-1 2-3 2S68 61 68 59z"/></svg></div>
  <div class="app run cal-app"><svg viewBox="0 0 102 102"><g clip-path="url(#squircle)"><path fill="#fbfaf9" d="M0 0h102v102H0z"/><path fill="#e0584b" d="M0 0h102v31H0z"/></g></svg><strong>BAHMAN</strong><b>4</b></div>
  <div class="app"><svg viewBox="0 0 102 102"><g clip-path="url(#squircle)"><path fill="#f3f2ef" d="M0 0h102v102H0z"/><path fill="#f6cd46" d="M0 0h102v26H0z"/><path stroke="#a9a9a7" stroke-width="2" d="M0 27h102"/><path stroke="#b9b9b7" stroke-width="2" stroke-dasharray="2 2" d="M2 31h98"/><path stroke="#d0cfd0" stroke-width="2" d="M0 51h102M0 77h102"/></g></svg></div>
  <div class="app"><svg viewBox="0 0 102 102"><rect width="102" height="102" rx="23" fill="url(#gPages)"/><path stroke="#f9d39c" stroke-width="4" stroke-linecap="round" d="M24 87h60"/><path fill="#fdfbf8" stroke="#d9d4cf" d="M15 87 20 74 72 23c6-5 11-6 12-4s0 7-5 12L27 80z"/><path stroke="#8d857c" stroke-width="2" d="m46 49 7 6"/></svg></div>
  <div class="app"><svg viewBox="0 0 102 102"><rect width="102" height="102" rx="23" fill="url(#gStore)"/><path fill="none" stroke="#fff" stroke-width="9" stroke-linecap="round" d="M56 23 34 62M46 23l4 6M57 42l20 36M20 62h36M68 62h14M28 74l-3 5"/></svg><em class="badge">6</em></div>
  <div class="app"><svg viewBox="0 0 102 102"><rect width="102" height="102" rx="23" fill="url(#gSilver)"/><circle cx="51" cy="51" r="44" fill="#26282a"/><circle cx="51" cy="51" r="38.500" fill="none" stroke="#9da2a5" stroke-width="5" stroke-dasharray="2 1.360"/><circle cx="51" cy="51" r="34" fill="none" stroke="#a4a9ac" stroke-width="5"/><circle cx="51" cy="51" r="24" fill="none" stroke="#85898c" stroke-width="5" stroke-dasharray="2 1"/><circle cx="51" cy="51" r="20" fill="#4b4e50"/><path stroke="#b5babd" stroke-width="4.500" d="M51 51h34M51 51 34 22M51 51 34 80"/><circle cx="51" cy="51" r="3.500" fill="#222"/></svg><em class="badge">2</em></div>
  <i class="rule"></i>
  <div class="app run"><svg viewBox="0 0 102 102"><rect width="102" height="102" rx="23" fill="url(#gSilver)"/><rect x="4" y="4" width="94" height="94" rx="20" fill="#000"/><rect x="11" y="11" width="80" height="80" rx="12" fill="#252527"/><path fill="none" stroke="#fff" stroke-width="3.600" d="m18 20 11 6-11 7M35 38.500h15"/></svg></div>
  <div class="app run"><svg viewBox="0 0 102 102"><path fill="#dcdcdc" d="M96 12c8 2 11 10 11 24H96z"/><path fill="#58b3ea" d="M96 36h11v18H96z"/><path fill="#ea9035" d="M96 54h11v18H96z"/><path fill="#6fd05f" d="M96 72h11c0 10-3 16-11 20z"/><rect width="102" height="102" rx="21" fill="url(#gTan)"/><path stroke="#8b6b40" stroke-width="1.500" d="M8 5v92"/><circle cx="54" cy="51" r="31.500" fill="none" stroke="#7d6034" stroke-width="2.200"/><circle cx="54" cy="44" r="11.500" fill="#826339"/><path fill="#826339" d="M32 72c6-14 38-14 44 0-10 14-34 14-44 0z"/></svg></div>
  <div class="app run"><svg viewBox="0 0 102 102"><rect width="102" height="102" rx="23" fill="url(#gGreen)"/><path fill="none" stroke="#f7f7f7" stroke-width="6.500" d="M17 85l5-18C6 40 24 14 51 14c21 0 37 16 37 36 0 27-28 46-53 31z"/><path fill="#f7f7f7" d="M33 37c2-6 6-7 9-5l5 11c0 3-4 5-4 7 4 8 9 12 16 15 3 0 5-5 7-5l9 5c2 2 0 9-6 11C52 80 29 52 33 37z"/></svg></div>
  <div class="app run"><svg viewBox="0 0 102 102"><rect width="102" height="102" rx="23" fill="#f2f2f1"/><path fill="#dd4b3e" d="M13.800 29A44 44 0 0 1 89.600 29L51 51z"/><path fill="#f3bd42" d="M89.600 29A44 44 0 0 1 51 95l20-33-1-33z"/><path fill="#4a9c51" d="M51 95A44 44 0 0 1 13.800 29L32 60l19 11 12-4z"/><path fill="#dd4b3e" d="m13.800 29 20 34L51 29z"/><path fill="#f3bd42" d="M51 29h38.600L70 62 51 51z"/><circle cx="51" cy="50" r="21.500" fill="#fff"/><circle cx="51" cy="50" r="17" fill="#3f78e3"/></svg></div>
  <i class="rule"></i>
  <div class="app doc"><svg viewBox="0 0 110 122"><path fill="#f3f3f3" d="M26 0h38l14 18v14H26z"/><path stroke="#aaa" stroke-width="1.500" d="M44 5h18M30 11h32"/><path fill="#d9483e" d="M15 15h80v20H15z"/><path fill="#f6f6f6" d="M1 27h108v82H1z"/><path stroke="#bbb" stroke-width="4" stroke-dasharray="7 1 12 1" d="M5 34h98"/></svg><em>JAN</em></div>
  <div class="app trash"><svg viewBox="0 0 92 122"><path fill="url(#gBin)" d="M1 16h90l-10 94c-3 12-67 12-70 0z"/><ellipse cx="46" cy="17" rx="45" ry="12" fill="#4b4f54"/><path fill="#e9e9e9" d="m8 12 18-10 14 6 14-7 14 6 14 8-4 12-20 4-22 1-22-6z"/><path fill="#8e8e90" d="m20 8 8 12-12 4zM60 6l6 16-14 2z"/><path fill="#4aa7e0" d="m30 14 12 2-6 7z"/><path fill="#37517f" d="m56 12 10 4-6 8z"/><path fill="#fff" d="m40 8 8 12-14 8z"/><path fill="none" stroke="#a4a9ae" stroke-width="2" d="M1 17c4 16 86 16 90 0"/></svg></div>
</footer>
</body>
</html>
```
FILE: styles.css
```
* { box-sizing: border-box; margin: 0; padding: 0; }
html, body { width: 2940px; height: 1912px; overflow: hidden; }
body {
  position: relative;
  font-family: Inter, "Liberation Sans", sans-serif;
  font-size: 26px;
  color: #e6e6e6;
  background:
    radial-gradient(ellipse 200px 100px at 2830px 1912px, #3b4a1e 0, #2c3815 50%, transparent 100%),
    radial-gradient(ellipse 260px 160px at 2880px 1760px, #2a2412 0, transparent 100%),
    linear-gradient(90deg, #060704 0, #0c1006 20%, #1b1a0d 60%, #171c0b 100%);
}
svg { display: block; flex: none; }
i, em { font-style: normal; }
.defs { position: absolute; }
.window { position: absolute; overflow: hidden; }

/* menu bar */
.menubar { height: 72px; display: flex; justify-content: space-between; align-items: center; padding: 0 0 2px 40px; background: linear-gradient(90deg, #f0efe9, #ecebe4 45%, #e3e1dc); color: #111; letter-spacing: -.45px; }
.menus { display: grid; grid-template-columns: 67px 142px 84px 88px 99px 128px 177px 132px 84px 137px auto; align-items: center; font-weight: 500; }
.menus b { font-weight: 700; }
.menu-apple { width: 28px; height: 32px; margin-top: -3px; }
.status { width: 876px; display: grid; grid-template-columns: 73px 73px 55px 81px 85px 78px 66px 63px auto; align-items: center; color: #222; }
.status svg { margin-top: 2px; }
.status .key { width: 44px; height: 32px; border-radius: 6px; background: #222; color: #fff; font-weight: 600; font-size: 24px; line-height: 32px; text-align: center; margin-top: 2px; }
.status small { font-size: 21.500px; font-weight: 500; margin-top: 2px; }
.status time { font-weight: 500; white-space: pre; letter-spacing: -.05px; }
.ink { color: #222; }

/* calendar window */
.calendar { left: 0; top: 73px; width: 2940px; height: 1669px; border-radius: 22px; background: #2c2c2a; border: 2px solid #5a5a59; display: flex; box-shadow: 0 0 0 1px #000; }
.cal-side { width: 360px; border-right: 2px solid #000; background: #262624; display: flex; flex-direction: column; }
.cal-side-top { height: 76px; display: flex; align-items: center; gap: 16px; padding-left: 24px; }
.dim-light { flex: none; width: 24px; height: 24px; border-radius: 50%; background: #4d4d4c; }
.cal-toggle { width: 57px; height: 44px; margin-left: 14px; border-radius: 10px; background: #333331; display: grid; place-items: center; }
.cal-list { padding: 8px 0 0 18px; }
.cal-list h4 { font-size: 22px; font-weight: 600; color: #6a6a68; height: 47px; line-height: 40px; padding-left: 13px; }
.cal-list p { height: 56px; border-radius: 10px; display: flex; align-items: center; padding-left: 17px; }
.cal-list p::before { content: ""; width: 28px; height: 28px; border-radius: 6px; background: var(--c); }
.cal-list p + h4 { margin-top: 35px; }
.c-blue { --c: #4a8fc0; } .c-purple { --c: #9c5cb4; } .c-sky { --c: #86b8c4; } .c-green { --c: #429a5a; } .c-mint { --c: #82bca4; } .c-slate { --c: #6f7b9c; } .c-gold { --c: #ccb042; }
.cal-list .on { background: #363634; }
.mini { margin-top: auto; height: 326px; border-top: 2px solid #3f3f3e; }
.mini-nav { height: 72px; padding: 34px 0 0 26px; }
.mini-grid { display: grid; grid-template-columns: repeat(7, 49px); grid-auto-rows: 34.300px; padding-left: 10px; justify-items: center; align-items: center; font-size: 22px; font-weight: 600; }
.mini-grid b { font-weight: 600; color: #8e8e8d; } .mini-grid i { color: #666665; font-weight: 500; } .mini-grid span { color: #d0d0cf; }
.cal-main { flex: 1; display: flex; flex-direction: column; }
.cal-bar { height: 76px; border-bottom: 2px solid #000; display: flex; align-items: flex-start; padding: 15px 14px 0 43px; }
.cal-bar > svg { margin-top: 9px; }
.segments { margin-left: 962px; width: 517px; height: 44px; border: 2px solid #3c3c3a; border-radius: 10px; display: grid; grid-template-columns: repeat(4, 1fr); color: #6e6e6d; text-align: center; line-height: 41px; }
.segments .on { background: #3c3c3a; border-radius: 8px; }
.cal-search { margin-left: auto; width: 400px; height: 44px; border: 2px solid #393937; border-radius: 10px; display: flex; align-items: center; gap: 15px; padding-left: 12px; color: #4f4f4e; }
.cal-search svg { color: #636362; }
.cal-body { flex: 1; display: flex; justify-content: space-between; }
.timeline { width: 1803px; display: flex; align-items: flex-end; }
.timeline span { width: 182px; padding: 0 13px 3px 0; text-align: right; font-size: 24px; color: #5c5c5b; }
.slots { flex: 1; height: 100%; background: #2f2f2f; border-bottom: 2px solid #3e3e3e; margin-bottom: 14px; }
.inspector { width: 436px; margin-right: 22px; }
.month { height: 333px; padding-top: 30px; display: flex; }
.month-col { width: 40px; margin-left: 20px; display: grid; grid-template-rows: 36px 36px repeat(5, 36.300px); align-content: start; justify-items: center; align-items: center; font-size: 24px; font-weight: 500; color: #9c9c9b; }
.month-col.left { margin-left: -17px; } .month-col i { color: #5b5b5a; }
.month-col .today { width: 40px; height: 40px; border-radius: 50%; background: #dededd; color: #000; text-align: center; line-height: 40px; font-weight: 600; }
.pager { margin-left: auto; display: flex; gap: 2px; padding-right: 2px; }
button { height: 40px; border: 0; border-top: 1px solid #858584; border-radius: 10px; background: #646463; color: #e9e9e8; font: 500 26px/38px Inter, sans-serif; width: 42px; display: grid; place-items: center; box-shadow: 0 1px 2px #111; }
button.wide { width: 126px; }
button path, .account path { fill: none; stroke: #e9e9e8; stroke-width: 2.600; }
.account { width: 388px; height: 38px; margin-left: auto; border-radius: 10px; background: #646463; border-top: 1px solid #858584; display: flex; align-items: center; gap: 9px; padding: 0 12px 2px 16px; letter-spacing: -.45px; font-weight: 500; white-space: nowrap; }
.account i { width: 18px; height: 18px; border-radius: 4px; background: #addde4; }
.account svg { margin-left: auto; }
.join { height: 70px; margin-top: 77px; border-top: 2px solid #4b4b49; border-bottom: 2px solid #4b4b49; display: flex; justify-content: flex-end; padding: 12px 4px 0 0; }
.join button { width: 92px; }
.note { height: 174px; padding-top: 56px; border-bottom: 2px solid #4b4b49; font-size: 27px; line-height: 42px; font-weight: 500; letter-spacing: .1px; }
.note .clip { display: flex; justify-content: flex-end; white-space: nowrap; } .note .second { padding-left: 22px; }
.line-a { height: 100px; border-bottom: 2px solid #4b4b49; } .line-b { height: 86px; border-bottom: 2px solid #4b4b49; }

/* chat window */
.chat { left: 2040px; top: 150px; width: 455px; height: 1536px; border-radius: 24px; border: 2px solid #4a4a49; background: #000; display: flex; flex-direction: column; box-shadow: 0 0 0 1px #000, 8px 20px 50px rgba(0,0,0,.35); }
.chat-head { height: 102px; background: #2b2b2a; padding: 32px 0 0 378px; color: #7a7a79; }
.chat-body { flex: 1; overflow: hidden; position: relative; display: flex; flex-direction: column; align-items: flex-end; }
.bubble { position: absolute; left: 392px; top: 250px; }
.chat-foot { height: 103px; background: #1f1f1f; border-top: 2px solid #454545; padding: 26px 0 0 394px; }

/* browser window */
.chrome { left: 44px; top: 118px; width: 2400px; height: 1580px; border-radius: 22px; background: #000; display: flex; flex-direction: column; box-shadow: 0 0 0 1px #000, 0 34px 70px rgba(0,0,0,.62); color: #fff; }
.chrome::after { content: ""; position: absolute; inset: 0; border-radius: 22px; border: 2px solid rgba(255,255,255,.3); pointer-events: none; }
.tabstrip { height: 80px; display: flex; padding-top: 12px; }
.lights { width: 180px; height: 68px; display: flex; gap: 16px; padding: 17px 0 0 42px; }
.lights i { flex: none; width: 24px; height: 24px; border-radius: 50%; background: #ec6a5e; } .lights i + i { background: #f4bf4f; } .lights i + i + i { background: #61c554; }
.tabs { display: flex; height: 58px; align-items: center; }
.tab { width: 142px; height: 32px; padding-left: 20px; border-right: 3px solid #343434; display: flex; align-items: center; gap: 17px; font-size: 24px; letter-spacing: -.55px; }
.tab.last { border-color: transparent; }
.tab > span:last-child { width: 50px; overflow: hidden; white-space: nowrap; -webkit-mask-image: linear-gradient(90deg, #000 60%, rgba(0,0,0,.1) 98%); mask-image: linear-gradient(90deg, #000 60%, rgba(0,0,0,.1) 98%); }
.fav { width: 32px; height: 32px; } .fav.f28 { width: 28px; height: 28px; margin: 0 2px; } .fav.white { fill: #fff; } .fav.grey { fill: #8e8e8e; height: 27px; margin-top: -3px; }
.favbox { position: relative; width: 32px; }
.favbox em { position: absolute; left: 8px; top: 12px; font-size: 18px; line-height: 18px; font-weight: 700; letter-spacing: -.5px; }
.tab-active { position: relative; width: 128px; height: 68px; margin-left: 2px; border-radius: 20px 20px 0 0; background: #2d2d2d; display: flex; justify-content: space-between; padding: 12px 23px 0 16px; }
.tab-active > svg + svg { margin-top: 7px; }
.tab-active::before, .tab-active::after { content: ""; position: absolute; bottom: 0; width: 20px; height: 20px; }
.tab-active::before { left: -20px; background: radial-gradient(circle at 0 0, transparent 20px, #2d2d2d 20.500px); }
.tab-active::after { right: -20px; background: radial-gradient(circle at 100% 0, transparent 20px, #2d2d2d 20.500px); }
.plus { margin: 17px 0 0 29px; }
.tab-list { width: 56px; height: 56px; margin-left: auto; margin-right: 12px; border-radius: 18px; background: #2d2d2d; display: grid; place-items: center; }
.toolbar { height: 92px; background: #2d2d2d; border-radius: 18px 18px 0 0; display: flex; align-items: center; }
.nav { width: 312px; display: flex; gap: 44px; padding-left: 30px; } .nav path { fill: none; stroke-width: 2.800; }
.omnibox { width: 1452px; height: 68px; border-radius: 34px; background: #3e3e3e; display: flex; align-items: center; padding: 0 31px 0 10px; }
.site { width: 48px; height: 48px; border-radius: 50%; background: #2a2a2a; display: grid; place-items: center; }
.url { width: 1249px; margin-left: 16px; white-space: nowrap; font-size: 28px; letter-spacing: .03px; color: #c0c0c0; } .url b { font-weight: 400; color: #fff; letter-spacing: -.35px; }
.url + svg + svg { margin-left: 30px; }
.ext { display: grid; grid-template-columns: 72px 74px 70px 68px 40px 74px 65px 88px auto; align-items: center; padding-left: 36px; }
.bar { width: 4px; height: 32px; background: #000; }
.avatar { width: 40px; height: 40px; border-radius: 50%; background: #b3431f; text-align: center; font-size: 22px; line-height: 40px; }
.bookmarks { height: 70px; padding: 0 0 14px 26px; background: #2d2d2d; border-bottom: 2px solid #565656; display: grid; grid-template-columns: 147px 181px 147px 187px 148px 305px 310px 105px 307px 206px 59px 33px auto; align-items: center; font-size: 24px; letter-spacing: -.15px; white-space: nowrap; }
.bookmarks a { display: flex; align-items: center; gap: 13px; } .bookmarks a:first-child { gap: 12px; } .bookmarks .all { gap: 17px; } .bookmarks a svg { width: 32px; height: 32px; } .bookmarks .ghost { fill: #24292f; } .bookmarks .more { width: 22px; height: 18px; }
.bookmarks a svg[viewBox="0 0 30 30"] { width: 30px; height: 30px; }

/* web page */
.page { flex: 1; position: relative; background: #ccc; font-family: "Open Sans", "Noto Sans", sans-serif; color: #000; overflow: hidden; display: flex; padding-left: 823px; }
.sheet { width: 1340px; background: linear-gradient(180deg, #c1c1c1 90%, #bbb); padding: 33px 48px 0; font-size: 26px; }
.table { border: 2px solid #7b7b7b; white-space: nowrap; }
.t1 { height: 1170px; }
.thead { height: 70px; background: #a2a2a2; border-bottom: 2px solid #7b7b7b; display: grid; grid-template-columns: 943px 99px auto; align-items: center; padding: 0 0 2px 14px; font-size: 28.900px; color: #2b2b2b; }
.r1 { height: 122px; border-bottom: 2px solid #7b7b7b; }
.r2 { height: 123px; border-bottom: 2px solid #7b7b7b; padding: 13px 0 0 1058px; line-height: 39px; font-size: 28px; }
.r3 { padding: 759px 0 0 80px; line-height: 39px; }
.link { color: #561a75; font-size: 28.600px; }
.t2 { margin-top: 34px; height: 300px; }
.r4 { padding: 16px 0 0 40px; }

.modal { position: absolute; left: 448px; top: 110px; width: 1504px; height: 1022px; border: 2px solid #c0c0c0; background: #fff; box-shadow: 0 2px 18px rgba(0,0,0,.6); }
.modal-head { height: 60px; background: #c0c0c0; display: flex; justify-content: flex-end; gap: 16px; padding: 10px 10px 0 0; } .modal-head svg { width: 40px; height: 40px; fill: #651b8b; }
.scroller { margin: 20px 34px 0; height: 900px; overflow: hidden; font-size: 23.050px; line-height: 39px; }
.grid { display: grid; grid-template-columns: 858px 570px; gap: 6px 4px; margin-top: -33px; }
.grid.second { margin-top: 55px; }
.cell { padding: 12px 0 12px 11px; white-space: nowrap; }
.cell.grey { background: #ccc; } .cell.grey p:first-child { line-height: 31px; }
.cell.green { background: #789a32; height: 54px; padding: 7px 0 0 11px; } .cell.green.small { font-size: 20.800px; padding: 5px 0 0 10px; }
.cell.light { background: #f0f0f0; height: 306px; display: flex; gap: 12px; padding: 11px 0 0 12px; } .cell.light svg { margin-top: 9px; }
.g1 { margin-top: 9px; } .g2 { margin-top: 16px; } .g2.in { padding-left: 56px; }
.grip { position: absolute; right: 5px; bottom: 5px; }

/* window peeking out under the dock */
.lower { left: 529px; top: 1820px; width: 2057px; height: 91px; border-radius: 0 0 22px 22px; border: 2px solid #454544; background: #201f1f; display: flex; }
.lower i { width: 441px; border-right: 2px solid #000; } .lower i + i { width: 565px; }

/* dock */
.dock { position: absolute; left: 179px; top: 1744px; width: 2583px; height: 159px; border-radius: 48px; border: 2px solid #50504c; background: linear-gradient(90deg, #1b1d16, #2a2926 35%, #272722 60%, #2e2e2c 80%, #2c2b15); display: grid; grid-template-columns: repeat(12, 136px) 62px repeat(4, 136px) 62px 136px 136px; padding: 21px 0 0 3px; justify-items: center; align-items: start; box-shadow: 0 0 0 1px #000; }
.app { position: relative; width: 102px; height: 134px; filter: drop-shadow(0 2px 2px rgba(0,0,0,.35)); }
.app > svg { width: 102px; height: 102px; overflow: visible; }
.run::after { content: ""; position: absolute; left: 47px; top: 123px; width: 8px; height: 8px; border-radius: 50%; background: #a3a39f; }
.petals rect { mix-blend-mode: multiply; opacity: .9; }
.badge { position: absolute; right: -16px; top: -12px; width: 48px; height: 48px; border-radius: 24px; background: #df4a3d; color: #fff; text-align: center; font-size: 26px; line-height: 48px; }
.badge.wide { width: 74px; letter-spacing: -.8px; }
.cal-app strong { position: absolute; left: 0; top: 4px; width: 102px; text-align: center; color: #fff; font-size: 21.500px; line-height: 26px; font-weight: 600; letter-spacing: -.2px; }
.cal-app b { position: absolute; left: 0; top: 32px; width: 100px; text-align: center; font-size: 60px; line-height: 64px; font-weight: 300; color: #222; }
.rule { width: 2px; height: 118px; margin: -2px 0 0 3px; background: #62625f; }
.doc > svg { width: 110px; height: 122px; margin: -10px 0 0 -4px; }
.doc em { position: absolute; left: 0; top: 3px; height: 14px; width: 102px; overflow: hidden; text-align: center; font-size: 18px; line-height: 20px; color: #fff; }
.trash > svg { width: 92px; height: 122px; margin: -10px 0 0 5px; }
```
